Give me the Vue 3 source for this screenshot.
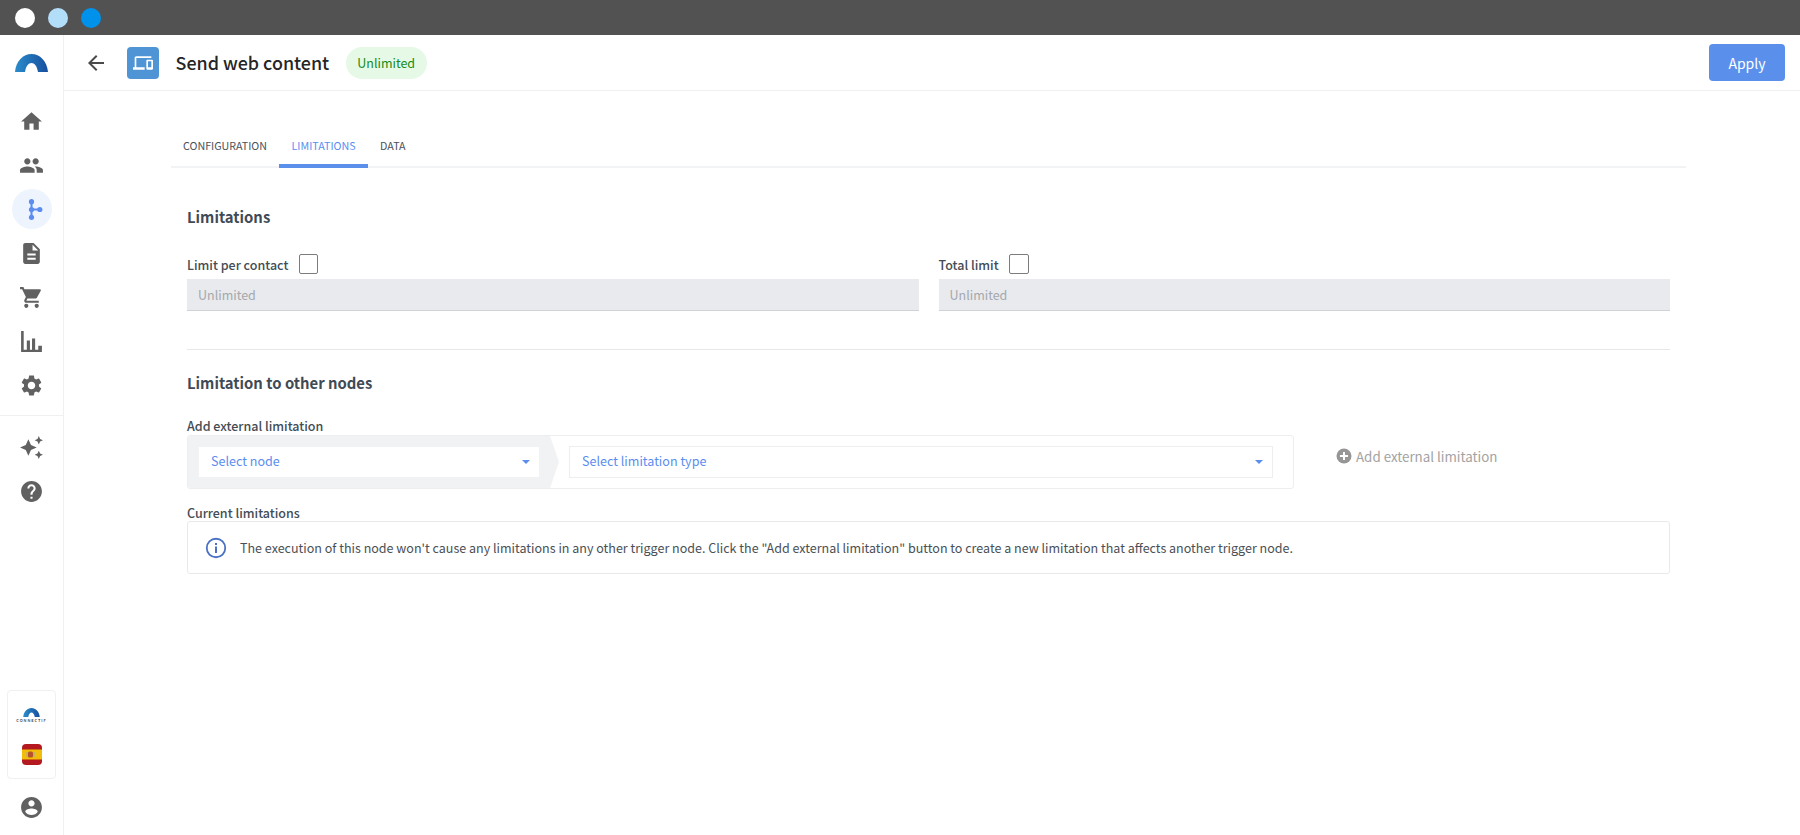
<template>
  <div class="app">
    <div class="topbar">
      <span class="dot white"></span>
      <span class="dot light"></span>
      <span class="dot blue"></span>
    </div>
    <div class="body">
      <aside class="sidebar">
        <div class="brand">
          <svg width="33" height="18" viewBox="0 0 33 18">
            <defs>
              <linearGradient id="arch" x1="0" y1="0" x2="1" y2="0">
                <stop offset="0" stop-color="#2a8ccb" />
                <stop offset="1" stop-color="#174f9e" />
              </linearGradient>
            </defs>
            <path d="M0 18C1 7 8 0 16.500 0S32 7 33 18H23C22 12 19.500 9 16.500 9S11 12 10 18z" fill="url(#arch)" />
          </svg>
        </div>
        <nav class="nav first-nav">
          <a v-for="item in navTop" :key="item.name" class="nav-item" :class="{ active: item.active }">
            <svg v-if="item.name === 'flow'" width="25" height="25" viewBox="0 0 24 24" fill="#5b8def">
              <circle cx="12" cy="4.500" r="2.500" />
              <circle cx="12" cy="12" r="2.500" />
              <circle cx="12" cy="19.500" r="2.500" />
              <circle cx="20" cy="12" r="2.500" />
              <path d="M11 4h2v16h-2zM12 11h8v2h-8z" />
            </svg>
            <svg v-else-if="item.name === 'bars'" width="25" height="25" viewBox="0 0 24 24" fill="#616161">
              <path d="M2 2h2.500v18h3V11h3v9h2V9h3v11h3v-4H22v6H2z" />
            </svg>
            <svg v-else width="25" height="25" viewBox="0 0 24 24" fill="#616161"><path :d="item.d" /></svg>
          </a>
        </nav>
        <div class="nav-sep"></div>
        <nav class="nav">
          <a v-for="item in navBottom" :key="item.name" class="nav-item">
            <svg width="25" height="25" viewBox="0 0 24 24" fill="#616161"><path :d="item.d" /></svg>
          </a>
        </nav>
        <div class="side-card">
          <div class="mini-brand">
            <svg width="17" height="9" viewBox="0 0 33 18">
              <path d="M0 18C1 7 8 0 16.500 0S32 7 33 18H23C22 12 19.500 9 16.500 9S11 12 10 18z" fill="url(#arch)" />
            </svg>
            <span>CONNECTIF</span>
          </div>
          <svg class="flag" width="20" height="21" viewBox="0 0 20 21">
            <rect width="20" height="21" rx="4" fill="#b3191f" />
            <rect y="5.500" width="20" height="10" fill="#f2bc0b" />
            <rect x="6" y="7.500" width="5" height="6" rx="1.500" fill="#b5512b" />
            <rect x="4.500" y="8" width="1" height="5" fill="#a8a8a0" />
            <rect x="11.500" y="8" width="1" height="5" fill="#a8a8a0" />
          </svg>
        </div>
        <div class="user">
          <svg width="25" height="25" viewBox="0 0 24 24" fill="#616161"><path :d="accountPath" /></svg>
        </div>
      </aside>

      <div class="main">
        <header class="header">
          <svg class="back" width="24" height="24" viewBox="0 0 24 24" fill="#4a4a4a">
            <path d="M20 11H7.830l5.590-5.590L12 4l-8 8 8 8 1.410-1.410L7.830 13H20v-2z" />
          </svg>
          <div class="tile">
            <svg width="20" height="20" viewBox="0 0 24 24" fill="#fff">
              <path d="M4 6h18V4H4c-1.100 0-2 .9-2 2v11H0v3h14v-3H4V6zm19 2h-6c-.55 0-1 .45-1 1v10c0 .55.45 1 1 1h6c.55 0 1-.45 1-1V9c0-.55-.45-1-1-1zm-1 9h-4v-7h4v7z" />
            </svg>
          </div>
          <h1 class="title">Send web content</h1>
          <span class="badge">Unlimited</span>
          <button class="apply">Apply</button>
        </header>

        <div class="content">
          <div class="tabs">
            <a v-for="tab in tabs" :key="tab" class="tab" :class="{ current: tab === activeTab }">{{ tab }}</a>
          </div>

          <section class="panel">
            <h2 class="heading">Limitations</h2>
            <div class="limits">
              <div v-for="field in limitFields" :key="field" class="field">
                <div class="field-label">
                  <label>{{ field }}</label>
                  <span class="checkbox"></span>
                </div>
                <div class="input-off">Unlimited</div>
              </div>
            </div>

            <hr class="divider" />

            <h2 class="heading second">Limitation to other nodes</h2>
            <div class="sub-label">Add external limitation</div>
            <div class="add-row">
              <div class="picker">
                <div class="step">
                  <div class="select first">
                    <span>Select node</span>
                    <i class="caret"></i>
                  </div>
                </div>
                <div class="step-rest">
                  <div class="select outlined">
                    <span>Select limitation type</span>
                    <i class="caret"></i>
                  </div>
                </div>
              </div>
              <div class="add-btn">
                <svg width="16" height="16" viewBox="0 0 16 16">
                  <circle cx="8" cy="8" r="7.500" fill="#969696" />
                  <path d="M7 4h2v3h3v2H9v3H7V9H4V7h3z" fill="#fff" />
                </svg>
                <span>Add external limitation</span>
              </div>
            </div>
            <div class="sub-label current-label">Current limitations</div>
            <div class="notice">
              <svg width="22" height="22" viewBox="0 0 22 22" fill="none">
                <circle cx="11" cy="11" r="9.250" stroke="#4a71c4" stroke-width="1.800" />
                <rect x="10" y="9.500" width="2" height="6.500" fill="#4a71c4" />
                <rect x="10" y="6" width="2" height="2" fill="#4a71c4" />
              </svg>
              <p>The execution of this node won't cause any limitations in any other trigger node. Click the "Add external limitation" button to create a new limitation that affects another trigger node.</p>
            </div>
          </section>
        </div>
      </div>
    </div>
  </div>
</template>

<script setup>
const activeTab = 'LIMITATIONS'
const tabs = ['CONFIGURATION', 'LIMITATIONS', 'DATA']
const limitFields = ['Limit per contact', 'Total limit']

const accountPath = 'M12 2C6.480 2 2 6.480 2 12s4.480 10 10 10 10-4.480 10-10S17.520 2 12 2zm0 3c1.660 0 3 1.340 3 3s-1.340 3-3 3-3-1.340-3-3 1.340-3 3-3zm0 14.200c-2.500 0-4.710-1.280-6-3.220.03-1.990 4-3.080 6-3.080 1.990 0 5.970 1.090 6 3.080-1.290 1.940-3.500 3.220-6 3.220z'

const navTop = [
  { name: 'home', d: 'M10 20v-6h4v6h5v-8h3L12 3 2 12h3v8z' },
  { name: 'people', d: 'M16 11c1.660 0 2.990-1.340 2.990-3S17.660 5 16 5c-1.660 0-3 1.340-3 3s1.340 3 3 3zm-8 0c1.660 0 2.990-1.340 2.990-3S9.660 5 8 5C6.340 5 5 6.340 5 8s1.340 3 3 3zm0 2c-2.330 0-7 1.170-7 3.500V19h14v-2.500c0-2.330-4.670-3.500-7-3.500zm8 0c-.29 0-.62.02-.97.05 1.160.84 1.970 1.970 1.970 3.450V19h6v-2.500c0-2.330-4.670-3.500-7-3.500z' },
  { name: 'flow', active: true },
  { name: 'doc', d: 'M14 2H6c-1.100 0-1.990.9-1.990 2L4 20c0 1.100.89 2 1.990 2H18c1.100 0 2-.9 2-2V8l-6-6zm2 16H8v-2h8v2zm0-4H8v-2h8v2zm-3-5V3.500L18.500 9H13z' },
  { name: 'cart', d: 'M7 18c-1.100 0-1.990.9-1.990 2S5.900 22 7 22s2-.9 2-2-.9-2-2-2zM1 2v2h2l3.600 7.590-1.350 2.450c-.16.28-.25.61-.25.96 0 1.100.9 2 2 2h12v-2H7.420c-.14 0-.25-.11-.25-.25l.03-.12.9-1.630h7.450c.75 0 1.410-.41 1.750-1.030l3.580-6.490c.08-.14.12-.31.12-.48 0-.55-.45-1-1-1H5.210l-.94-2H1zm16 16c-1.100 0-1.990.9-1.990 2s.89 2 1.990 2 2-.9 2-2-.9-2-2-2z' },
  { name: 'bars' },
  { name: 'settings', d: 'M19.140 12.940c.04-.3.06-.61.06-.94 0-.32-.02-.64-.07-.94l2.030-1.580c.18-.14.23-.41.12-.61l-1.920-3.320c-.12-.22-.37-.29-.59-.22l-2.390.96c-.5-.38-1.030-.7-1.620-.94l-.36-2.540c-.04-.24-.24-.41-.48-.41h-3.840c-.24 0-.43.17-.47.41l-.36 2.540c-.59.24-1.130.57-1.620.94l-2.390-.96c-.22-.08-.47 0-.59.22L2.740 8.870c-.12.21-.08.47.12.61l2.030 1.580c-.05.3-.09.63-.09.94s.02.64.07.94l-2.030 1.580c-.18.14-.23.41-.12.61l1.920 3.320c.12.22.37.29.59.22l2.390-.96c.5.38 1.030.7 1.620.94l.36 2.540c.05.24.24.41.48.41h3.840c.24 0 .44-.17.47-.41l.36-2.540c.59-.24 1.130-.56 1.620-.94l2.390.96c.22.08.47 0 .59-.22l1.920-3.320c.12-.22.07-.47-.12-.61l-2.010-1.580zM12 15.600c-1.980 0-3.600-1.620-3.600-3.600s1.620-3.600 3.600-3.600 3.600 1.620 3.600 3.600-1.620 3.600-3.600 3.600z' }
]

const navBottom = [
  { name: 'spark', d: 'M19 9l1.250-2.750L23 5l-2.750-1.250L19 1l-1.250 2.750L15 5l2.750 1.250L19 9zm-7.500.5L9 4 6.500 9.500 1 12l5.500 2.500L9 20l2.500-5.500L17 12l-5.500-2.500zM19 15l-1.250 2.750L15 19l2.750 1.250L19 23l1.250-2.750L23 19l-2.750-1.250L19 15z' },
  { name: 'help', d: 'M12 2C6.480 2 2 6.480 2 12s4.480 10 10 10 10-4.480 10-10S17.520 2 12 2zm1 17h-2v-2h2v2zm2.070-7.750l-.9.92C13.450 12.900 13 13.500 13 15h-2v-.5c0-1.100.45-2.100 1.170-2.830l1.240-1.260c.37-.36.59-.86.59-1.410 0-1.100-.9-2-2-2s-2 .9-2 2H8c0-2.210 1.790-4 4-4s4 1.790 4 4c0 .88-.36 1.680-.93 2.250z' }
]
</script>

<style>
html, body {
  margin: 0;
  background: #fff;
}
</style>

<style scoped>
.app {
  width: 1800px;
  height: 835px;
  display: flex;
  flex-direction: column;
  overflow: hidden;
  font-family: "Noto Sans CJK SC", "Noto Sans", sans-serif;
  color: #444;
}
.topbar {
  height: 35px;
  background: #525252;
  display: flex;
  align-items: center;
  gap: 13px;
  padding-left: 15px;
  flex-shrink: 0;
}
.dot {
  width: 20px;
  height: 20px;
  border-radius: 50%;
}
.white { background: #fff; }
.light { background: #b3defa; }
.blue { background: #0091ea; }
.body {
  flex: 1;
  display: flex;
  min-height: 0;
}
.sidebar {
  width: 63px;
  border-right: 1px solid #f0f0f0;
  display: flex;
  flex-direction: column;
  align-items: center;
  flex-shrink: 0;
}
.brand {
  height: 55px;
  display: flex;
  justify-content: center;
  padding-top: 19px;
  box-sizing: border-box;
  width: 100%;
}
.nav {
  display: flex;
  flex-direction: column;
  align-items: center;
}
.first-nav {
  padding-top: 9px;
}
.nav-item {
  width: 40px;
  height: 44px;
  display: flex;
  align-items: center;
  justify-content: center;
}
.nav-item.active {
  height: 40px;
  margin: 2px 0;
  border-radius: 50%;
  background: #eef4fe;
}
.nav-sep {
  width: 100%;
  border-top: 1px solid #f0f0f0;
  margin: 8px 0 9px;
}
.side-card {
  margin-top: auto;
  width: 49px;
  height: 89px;
  box-sizing: border-box;
  border: 1px solid #f0f0f0;
  border-radius: 4px;
  display: flex;
  flex-direction: column;
  align-items: center;
  padding-top: 17px;
}
.mini-brand {
  display: flex;
  flex-direction: column;
  align-items: center;
  height: 36px;
}
.mini-brand svg {
  display: block;
}
.mini-brand span {
  font-size: 4px;
  line-height: 6px;
  letter-spacing: 0.9px;
  color: #333;
  font-weight: 500;
  white-space: nowrap;
}
.flag {
  display: block;
}
.user {
  height: 56px;
  display: flex;
  align-items: center;
  justify-content: center;
}
.main {
  flex: 1;
  min-width: 0;
  display: flex;
  flex-direction: column;
}
.header {
  height: 56px;
  box-sizing: border-box;
  border-bottom: 1px solid #f0f0f0;
  display: flex;
  align-items: center;
  padding: 0 15px 0 20px;
}
.back {
  flex-shrink: 0;
}
.tile {
  width: 32px;
  height: 32px;
  margin-left: 19px;
  border-radius: 4px;
  background: #4f94d4;
  display: flex;
  align-items: center;
  justify-content: center;
}
.title {
  margin: 0 0 0 16.500px;
  font-size: 17.900px;
  line-height: 27px;
  font-weight: 500;
  color: #252525;
}
.badge {
  margin-left: 16.500px;
  height: 32px;
  width: 81px;
  border-radius: 16px;
  background: #e6f9e6;
  color: #158c15;
  font-size: 12.500px;
  line-height: 31px;
  text-align: center;
}
.apply {
  margin-left: auto;
  width: 76px;
  height: 37px;
  border: none;
  border-radius: 4px;
  background: #5b8fec;
  color: #fff;
  font-family: inherit;
  font-size: 14px;
  padding: 0;
}
.content {
  flex: 1;
  padding: 0 114px 0 107px;
}
.tabs {
  margin-top: 32px;
  height: 45px;
  box-sizing: border-box;
  border-bottom: 2px solid #f2f3f5;
  display: flex;
}
.tab {
  height: 45px;
  box-sizing: border-box;
  padding: 0 12px;
  font-size: 10.700px;
  line-height: 45px;
  color: #4b5158;
  white-space: nowrap;
}
.tab.current {
  color: #5b8def;
  border-bottom: 4px solid #5b8fec;
  border-radius: 4px 4px 0 0;
  padding: 0 12.500px;
}
.panel {
  padding: 0 16px 0 16px;
}
.heading {
  margin: 0;
  padding-top: 37px;
  font-size: 14.850px;
  line-height: 24px;
  font-weight: 700;
  color: #3f4a55;
}
.limits {
  display: flex;
  gap: 20px;
  margin-top: 23px;
}
.field {
  flex: 1;
}
.field-label {
  display: flex;
  align-items: center;
  gap: 10px;
  height: 24px;
  margin-bottom: 3px;
}
.field-label label {
  font-size: 12.500px;
  line-height: 20px;
  font-weight: 500;
  color: #444c55;
  padding-top: 2px;
}
.checkbox {
  border: 1.500px solid #7c7c7c;
  border-radius: 2px;
  box-sizing: border-box;
  width: 19.500px;
  height: 20px;
  margin-left: .5px;
}
.input-off {
  height: 32px;
  box-sizing: border-box;
  background: #e8eaed;
  border-bottom: 1px solid #cfd2d6;
  padding-left: 11px;
  font-size: 12.500px;
  line-height: 31px;
  color: #a4a8ad;
}
.divider {
  margin: 38px 0 0;
  border: none;
  border-top: 1px solid #e6e8ea;
}
.heading.second {
  padding-top: 21px;
}
.sub-label {
  font-size: 12.500px;
  line-height: 18px;
  font-weight: 500;
  color: #444c55;
}
.heading.second + .sub-label {
  margin-top: 22px;
}
.add-row {
  display: flex;
  align-items: flex-start;
}
.picker {
  width: 1107px;
  height: 54px;
  box-sizing: border-box;
  border: 1px solid #eceef0;
  border-radius: 3px;
  display: flex;
  overflow: hidden;
}
.step {
  width: 371px;
  flex-shrink: 0;
  height: 52px;
  background: #f1f2f4;
  clip-path: polygon(0 0, 362px 0, 100% 50%, 362px 100%, 0 100%);
  padding: 11px 0 0 11px;
  box-sizing: border-box;
}
.step-rest {
  flex: 1;
  padding: 10px 20px 0 10px;
}
.select {
  height: 30px;
  box-sizing: border-box;
  background: #fff;
  display: flex;
  align-items: center;
  justify-content: space-between;
  padding: 0 9px 0 12px;
  font-size: 12.550px;
  color: #5b8def;
}
.select span {
  line-height: 16px;
  margin-top: -3px;
}
.select.first {
  width: 340px;
}
.select.outlined {
  height: 32px;
  border: 1px solid #eceef0;
}
.caret {
  width: 0;
  height: 0;
  border-left: 4.500px solid transparent;
  border-right: 4.500px solid transparent;
  border-top: 4.500px solid #5b8def;
}
.add-btn {
  margin-left: 42px;
  height: 42px;
  display: flex;
  align-items: center;
  gap: 4px;
  font-size: 13.350px;
  color: #a3a3a3;
}
.current-label {
  margin-top: 15px;
  line-height: 17px;
}
.notice {
  height: 53px;
  box-sizing: border-box;
  border: 1px solid #e8e9eb;
  border-radius: 3px;
  display: flex;
  align-items: center;
  gap: 13px;
  padding-left: 17px;
}
.notice p {
  margin: 0;
  font-size: 12.530px;
  line-height: 20px;
  color: #4a4f55;
}
</style>
